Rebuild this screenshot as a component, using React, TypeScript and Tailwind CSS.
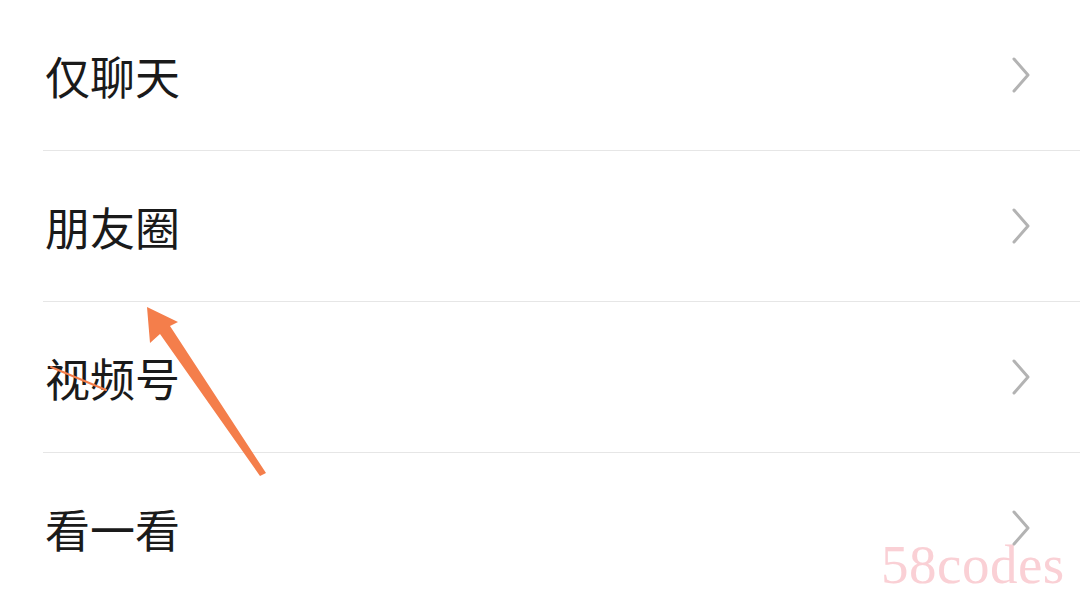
const items = ['仅聊天', '朋友圈', '视频号', '看一看'];

function Chevron() {
  return (
    <svg className="relative z-10" width="20" height="36" viewBox="0 0 20 36" fill="none">
      <path d="M3 2 L17 18 L3 34" stroke="#b3b3b3" strokeWidth="3" strokeLinecap="round" strokeLinejoin="round" />
    </svg>
  );
}

export default function App() {
  return (
    <div
      className="relative w-[1080px] h-[596px] overflow-hidden bg-white"
      style={{ fontFamily: '"Noto Sans CJK SC", "Noto Sans", sans-serif' }}
    >
      {/* watermark */}
      <span
        className="absolute left-[881px] top-[537px] text-[55px] leading-none tracking-[0.5px] text-[#fad0d5]"
        style={{ fontFamily: '"Liberation Serif", serif' }}
      >
        58codes
      </span>

      <div className="relative flex flex-col">
        {items.map((label, i) => (
          <div key={label} className="flex flex-col pl-[43px]">
            <div className="flex items-center justify-between h-[150px] pr-[49px]">
              <span className="pl-[2px] text-[45px] leading-none text-[#1a1a1a]">{label}</span>
              <Chevron />
            </div>
            {i < items.length - 1 && <div className="h-px bg-[#e6e6e6]" />}
          </div>
        ))}
      </div>

      {/* orange annotation arrow */}
      <svg className="absolute left-0 top-0" width="1080" height="596" viewBox="0 0 1080 596">
        <polygon points="147,307 178,322 170,326 266,473 260,476 160,334 150,343" fill="#f47e4b" />
        <line x1="51" y1="367" x2="106" y2="390" stroke="#f47e4b" strokeWidth="2" strokeLinecap="round" />
      </svg>
    </div>
  );
}
